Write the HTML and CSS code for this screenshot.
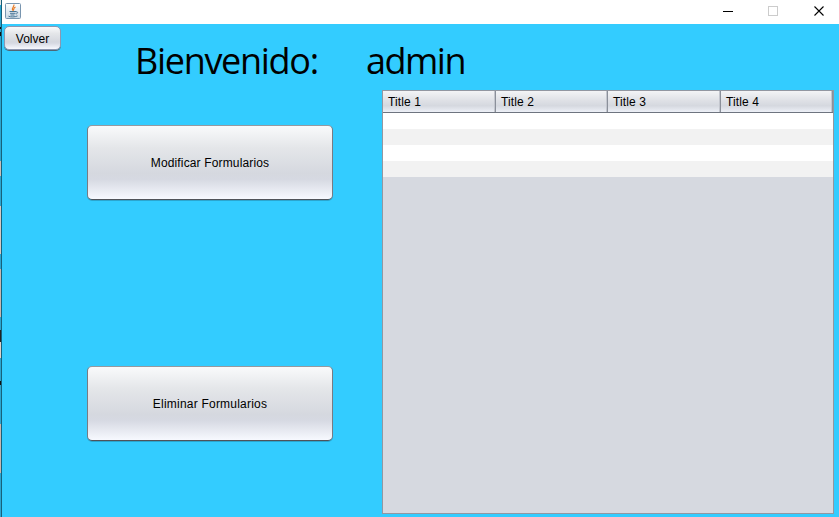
FILE: index.html
```html
<!DOCTYPE html>
<html lang="es">
<head>
<meta charset="utf-8">
<title>Bienvenido</title>
<link rel="stylesheet" href="styles.css">
</head>
<body>
<div class="backdrop"></div>
<div class="window">
  <header class="titlebar">
    <svg class="java" width="16" height="16" viewBox="0 0 16 16">
      <defs><linearGradient id="tile" x1="0" y1="0" x2="0" y2="1"><stop offset="0" stop-color="#fff"/><stop offset="1" stop-color="#cbd8e4"/></linearGradient></defs>
      <rect x=".5" y=".5" width="15" height="15" rx="1" fill="url(#tile)" stroke="#7895af"/>
      <path d="M8.8 1.5C10 3.5 6 4.5 7.8 7.5M10.5 4C7.8 5.2 9.500 6 8.200 7.800" fill="none" stroke="#e87821" stroke-width="1.1"/>
      <path d="M4.500 8.500h6.500M5 10.300h5.500M5.500 12h4M11 8.800c2.400-.5 2 2-.2 2.200M3.500 13.200c2 1 6.500 1 9-.3" fill="none" stroke="#497596" stroke-width="1"/>
    </svg>
    <svg class="controls" width="138" height="24" viewBox="0 0 138 24" fill="none" shape-rendering="crispEdges">
      <path d="M22 11.5h10" stroke="#000"/>
      <rect x="67.5" y="6.5" width="9" height="9" stroke="#ccc"/>
      <path d="M113.500 6.500l9 9M122.500 6.500l-9 9" stroke="#000" shape-rendering="auto" stroke-width="1.1"/>
    </svg>
  </header>
  <main class="content">
    <section class="left">
      <button class="btn back">Volver</button>
      <button class="btn action">Modificar Formularios</button>
      <button class="btn action second">Eliminar Formularios</button>
    </section>
    <section class="right">
      <div class="user"><span class="greeting">Bienvenido:</span><span class="name">admin</span></div>
      <div class="table">
        <div class="head"><div>Title 1</div><div>Title 2</div><div>Title 3</div><div>Title 4</div></div>
        <div class="row"></div><div class="row"></div><div class="row"></div><div class="row"></div>
      </div>
    </section>
  </main>
</div>
</body>
</html>
```
FILE: styles.css
```css
* { box-sizing: border-box; }
body {
  margin: 0;
  display: flex;
  width: 839px;
  height: 517px;
  overflow: hidden;
  background: #3cf;
  color: #000;
  font: 12px "Liberation Sans", sans-serif;
}
.backdrop {
  width: 2px;
  border-right: 1px solid #17607a;
  background: linear-gradient(#e4e4e4 5px, #2aa5d0 5px 27px, #111 27px 29px, #2aa5d0 29px 32px, #111 32px 36px, #2aa5d0 36px 161px, #c9bdb8 161px 176px, #2aa5d0 176px 206px, #d9c8c2 206px 254px, #2aa5d0 254px 269px, #c9b5ae 269px 317px, #2aa5d0 317px 330px, #222 330px 342px, #e0d0c8 342px 358px, #2aa5d0 358px 381px, #111 381px 385px, #2aa5d0 385px 424px, #c9b5ae 424px 473px, #2aa5d0 473px);
}
.window { width: 837px; }
.titlebar {
  height: 24px;
  display: flex;
  justify-content: space-between;
  padding-left: 3px;
  background: #fff;
}
.java { margin-top: 3px; }
.content { display: flex; height: 493px; }
.left {
  width: 380px;
  display: flex;
  flex-direction: column;
  align-items: flex-start;
  padding: 2px 0 0 2px;
}
.btn {
  padding: 0;
  border: 1px solid;
  border-color: #96999f #777b83 #50535a #777b83;
  border-radius: 5px;
  background: linear-gradient(#f9fafb, #e4e6e9 30%, #d5d8df 65%, #d6d9e2 73%, #f7f9ff);
  box-shadow: 0 1px 0 #2ba5cf;
  color: #000;
  font: inherit;
}
.back {
  width: 57px;
  height: 24px;
  padding-top: 1px;
  border-color: #8d97b1;
  box-shadow: 0 1px 0 #4e6676;
}
.action {
  width: 246px;
  height: 75px;
  margin: 75px 0 0 83px;
  letter-spacing: .15px;
}
.second { margin-top: 166px; letter-spacing: .22px; }
.right { width: 452px; }
.user {
  height: 66px;
  margin-left: -247px;
  display: flex;
  align-items: flex-start;
  padding-top: 12px;
  font: 36px/49px "Open Sans", "Noto Sans", sans-serif;
  white-space: nowrap;
}
.greeting { width: 231px; letter-spacing: -1.3px; }
.name { letter-spacing: -1.5px; }
.table {
  height: 424px;
  border: 1px solid #9297a1;
  background: #d6d9e0;
}
.head {
  display: grid;
  grid-template-columns: 113px 112px 113px 112px;
  height: 22px;
  border-bottom: 1px solid #6e747f;
  background: linear-gradient(#f3f4f6, #dfe1e6 45%, #d5d8df 70%, #edf0f7);
  line-height: 21px;
}
.head div {
  height: 21px;
  padding: 1px 0 0 5px;
  border-right: 1px solid #8b909a;
  box-shadow: inset -1px 0 #c3c6ce;
  letter-spacing: .1px;
}
.row { height: 16px; background: #fff; }
.row:nth-child(odd) { background: #f2f2f2; }
```
